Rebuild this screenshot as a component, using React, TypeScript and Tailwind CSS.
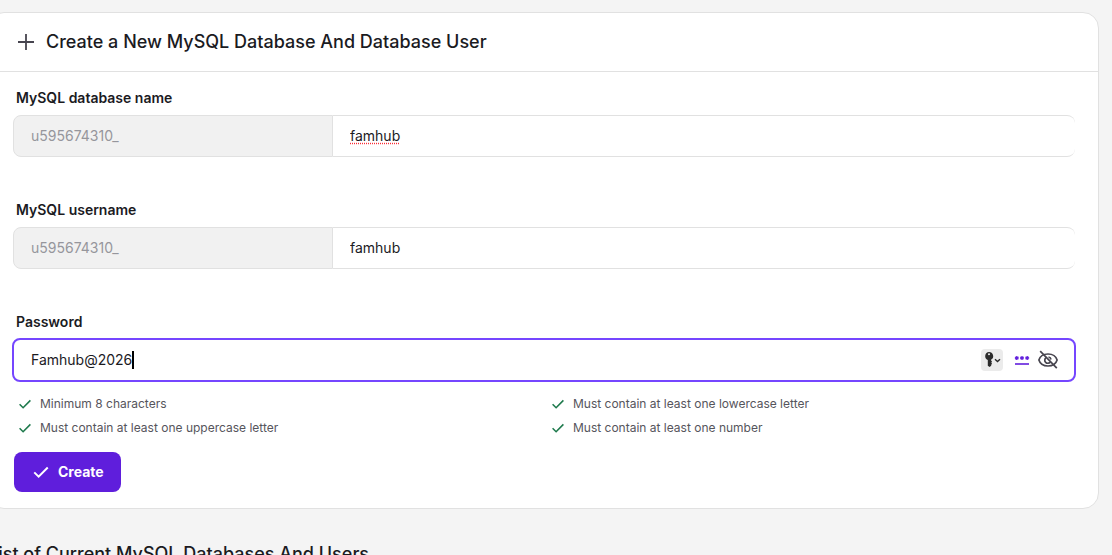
import React, { useState } from "react";

const rules = [
  { text: "Minimum 8 characters", test: (v: string) => v.length >= 8 },
  { text: "Must contain at least one lowercase letter", test: (v: string) => /[a-z]/.test(v) },
  { text: "Must contain at least one uppercase letter", test: (v: string) => /[A-Z]/.test(v) },
  { text: "Must contain at least one number", test: (v: string) => /\d/.test(v) },
];

const PlusIcon = () => (
  <svg className="h-5 w-5 shrink-0" viewBox="0 0 20 20" fill="none" stroke="#47454f" strokeWidth="1.8">
    <path d="M10 2v16M2 10h16" />
  </svg>
);

const CheckIcon = ({ className }: { className: string }) => (
  <svg className={className} viewBox="0 0 16 16" fill="none" stroke="currentColor" strokeWidth="1.6">
    <path d="m2.600 8.300 3.500 3.400 7.300-7.300" />
  </svg>
);

const KeyIcon = () => (
  <svg className="h-[22px] w-[22px]" viewBox="0 0 22 22">
    <rect width="22" height="22" rx="4" fill="#ebebeb" />
    <path
      fillRule="evenodd"
      fill="#2b2b2b"
      d="M8 3a4.100 4.100 0 0 1 2.200 7.600v1.100l.9 1-.9 1 .9 1-.9 1.100v1L8.600 18 6.800 16.700V10.900A4.100 4.100 0 0 1 8 3Zm0 1.200a1 1 0 1 0 0 2 1 1 0 0 0 0-2Z"
    />
    <path d="m14 10.300 2.500 2.300 2.500-2.300" fill="none" stroke="#2b2b2b" strokeWidth="1.400" />
  </svg>
);

const GenerateIcon = () => (
  <svg className="h-4 w-4" viewBox="0 0 16 16">
    <path d="M1 12h14" stroke="#6220dd" strokeWidth="1.600" />
    <path
      d="M2.800 4v4M1 5l3.600 2M1 7l3.600-2M8 4v4M6.200 5l3.600 2M6.200 7l3.600-2M13.200 4v4M11.400 5l3.600 2M11.400 7l3.600-2"
      stroke="#6220dd"
      strokeWidth="1.300"
    />
  </svg>
);

const EyeOffIcon = () => (
  <svg className="h-5 w-5" viewBox="0 0 20 20" fill="none" stroke="#47454f" strokeWidth="1.700">
    <path d="M.9 10C2 6.500 5.600 4 10 4s8 2.500 9.100 6c-1.100 3.500-4.700 6-9.100 6S2 13.500.9 10Z" />
    <path d="M8 7.700a3.100 3.100 0 1 0 4.300 4.400M10.500 7a3 3 0 0 1 2.500 2.500" />
    <path d="m2.200 1.200 16.600 17" />
  </svg>
);

type PrefixedFieldProps = {
  id: string;
  label: string;
  value: string;
  onChange: (value: string) => void;
  misspelled?: boolean;
};

const PrefixedField = ({ id, label, value, onChange, misspelled }: PrefixedFieldProps) => (
  <div className="mb-[43px]">
    <label htmlFor={id} className="mb-[7px] block pl-[3px] text-sm font-semibold">
      {label}
    </label>
    <div className="flex h-[42px]">
      <input
        aria-label={`${label} prefix`}
        value="u595674310_"
        disabled
        className="w-80 rounded-l-lg border border-[#e1e1e1] bg-[#f1f1f1] px-[17px] text-sm text-[#96969c]"
      />
      <input
        id={id}
        type="text"
        value={value}
        onChange={(e) => onChange(e.target.value)}
        className={
          "min-w-0 flex-1 rounded-r-lg border-y border-[#e1e1e1] px-[17px] text-sm outline-none " +
          (misspelled ? "underline decoration-red-500 decoration-dotted underline-offset-2" : "")
        }
      />
    </div>
  </div>
);

const App = () => {
  const [database, setDatabase] = useState("famhub");
  const [username, setUsername] = useState("famhub");
  const [password, setPassword] = useState("Famhub@2026");
  const [hidden, setHidden] = useState(false);

  return (
    <div className="h-screen overflow-hidden bg-[#f4f4f4] pt-3 pr-[13px] font-[Inter,sans-serif] text-[#1b1b1f]">
      <main className="-ml-3">
        <section className="rounded-2xl border border-[#e1e1e1] bg-white">
          <div className="flex h-[59px] items-center gap-2.5 border-b border-[#e1e1e1] pl-[27px]">
            <PlusIcon />
            <h2 className="text-lg font-medium">Create a New MySQL Database And Database User</h2>
          </div>
          <form className="pt-4 pr-[23px] pb-4 pl-6" onSubmit={(e) => e.preventDefault()}>
            <PrefixedField
              id="database"
              label="MySQL database name"
              value={database}
              onChange={setDatabase}
              misspelled
            />
            <PrefixedField id="username" label="MySQL username" value={username} onChange={setUsername} />

            <label htmlFor="password" className="mb-1.5 block pl-[3px] text-sm font-semibold">
              Password
            </label>
            <div className="-mx-px flex h-11 items-center rounded-lg border-2 border-[#7546ff] pr-4 pl-[17px]">
              <input
                id="password"
                type={hidden ? "password" : "text"}
                value={password}
                onChange={(e) => setPassword(e.target.value)}
                className="field-sizing-content text-sm caret-transparent outline-none"
              />
              <span className="h-[18px] w-0.5 bg-black" />
              <div className="ml-auto flex items-center">
                <button type="button" aria-label="Saved passwords">
                  <KeyIcon />
                </button>
                <button type="button" aria-label="Generate password" className="ml-[11px]">
                  <GenerateIcon />
                </button>
                <button
                  type="button"
                  aria-label="Toggle password visibility"
                  className="ml-2"
                  onClick={() => setHidden(!hidden)}
                >
                  <EyeOffIcon />
                </button>
              </div>
            </div>

            <ul className="mt-3.5 -mr-2 grid grid-cols-2 gap-y-2 pl-1">
              {rules.map((rule) => (
                <li key={rule.text} className="flex items-center gap-[7px] text-xs text-[#56555c]">
                  <CheckIcon className={"h-4 w-4 " + (rule.test(password) ? "text-[#1f7a4d]" : "text-gray-400")} />
                  {rule.text}
                </li>
              ))}
            </ul>

            <button
              type="submit"
              className="mt-4 ml-px flex h-10 items-center gap-[7px] rounded-lg bg-[#5f1edc] px-[17px] text-sm font-bold text-white"
            >
              <CheckIcon className="h-5 w-5" />
              Create
            </button>
          </form>
        </section>
        <h2 className="mt-[31px] text-lg font-medium">List of Current MySQL Databases And Users</h2>
      </main>
    </div>
  );
};

export default App;
